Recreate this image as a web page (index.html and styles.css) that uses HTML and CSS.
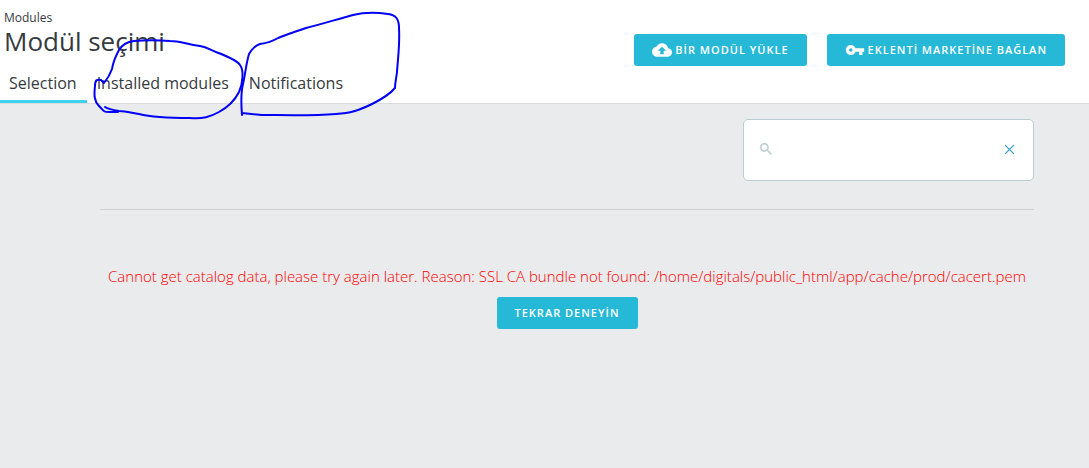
FILE: index.html
```html
<!DOCTYPE html>
<html lang="tr">
<head>
  <meta charset="UTF-8">
  <meta name="viewport" content="width=device-width, initial-scale=1">
  <title>Modül seçimi</title>
  <link rel="stylesheet" href="styles.css">
</head>
<body>

  <header class="page-head">
    <div class="heading">
      <div class="breadcrumb">Modules</div>
      <h1 class="title">Modül seçimi</h1>
      <nav class="tabs">
        <a class="tab current" href="#selection">Selection</a>
        <a class="tab" href="#installed">Installed modules</a>
        <a class="tab" href="#notifications">Notifications</a>
      </nav>
    </div>

    <div class="toolbar">
      <button class="btn" type="button">
        <svg class="icon" viewBox="0 0 24 24"><path d="M19.35 10.04C18.67 6.59 15.64 4 12 4 9.11 4 6.6 5.64 5.35 8.04 2.34 8.36 0 10.91 0 14c0 3.31 2.69 6 6 6h13c2.76 0 5-2.24 5-5 0-2.64-2.05-4.78-4.65-4.96zM14 13v4h-4v-4H7l5-5 5 5h-3z"/></svg>
        BİR MODÜL YÜKLE
      </button>
      <button class="btn" type="button">
        <svg class="icon" viewBox="0 0 24 24"><path d="M12.65 10C11.83 7.67 9.61 6 7 6c-3.31 0-6 2.69-6 6s2.69 6 6 6c2.61 0 4.83-1.67 5.65-4H17v4h4v-4h2v-4H12.65zM7 14c-1.1 0-2-.9-2-2s.9-2 2-2 2 .9 2 2-.9 2-2 2z"/></svg>
        EKLENTİ MARKETİNE BAĞLAN
      </button>
    </div>
  </header>

  <main class="content">
    <form class="search">
      <svg class="search-icon" viewBox="0 0 24 24"><path d="M15.5 14h-.79l-.28-.27C15.41 12.59 16 11.11 16 9.5 16 5.91 13.09 3 9.5 3S3 5.91 3 9.5 5.91 16 9.5 16c1.61 0 3.09-.59 4.23-1.57l.27.28v.79l5 4.99L20.49 19l-4.99-5zm-6 0C7.01 14 5 11.99 5 9.5S7.01 5 9.5 5 14 7.01 14 9.5 11.99 14 9.5 14z"/></svg>
      <input class="search-input" type="text" aria-label="Search modules">
      <button class="clear" type="reset" aria-label="Clear">
        <svg class="clear-icon" viewBox="0 0 10 10"><path d="M1 1l8 8M9 1L1 9"/></svg>
      </button>
    </form>

    <hr class="rule">

    <div class="failure">
      <p class="error">Cannot get catalog data, please try again later. Reason: SSL CA bundle not found: /home/digitals/public_html/app/cache/prod/cacert.pem</p>
      <button class="btn" type="button">TEKRAR DENEYİN</button>
    </div>
  </main>

  <!-- pen marks around the two tabs -->
  <svg class="marks" width="410" height="130" viewBox="0 0 410 130">
    <path d="M105 107C108 109 113 110 119 111C126 111 132 113 139 114C151 117 171 118 190 118C203 119 210 117 219 112C230 106 235 100 239 92C243 83 244 70 240 65C237 60 226 56 216 52C209 49 206 47 200 46C186 44 180 41 170 41C158 40 144 40 134 41C126 42 122 45 119 50C114 59 113 63 112 69C110 75 108 78 104 83L101 80C97 79 95 80 95 86C94 95 94 101 99 106C104 111 103 112 109 112L118 112"/>
    <path d="M242 115C241 103 241 92 243 84C245 76 246 64 249 54C251 50 256 45 260 44C268 43 273 41 278 38C285 35 297 31 306 28C322 24 338 19 353 15C361 13 374 12 388 14C396 15 399 19 399 28C400 44 398 57 397 72C396 80 395 83 395 88C390 94 380 100 372 104C358 111 350 113 336 114C312 116 280 115 262 115L242 113"/>
  </svg>

</body>
</html>
```
FILE: styles.css
```css
* {
  box-sizing: border-box;
}

body {
  margin: 0;
  min-height: 100vh;
  background: #e9ebec;
  color: #363a41;
  font-family: "Open Sans", "Noto Sans", sans-serif;
}

.page-head {
  display: flex;
  justify-content: space-between;
  align-items: flex-start;
  background: #fff;
  border-bottom: 1px solid #d9dbdc;
}

.heading {
  padding-top: 10px;
}

.breadcrumb {
  padding-left: 4px;
  font-size: 12px;
  line-height: 16px;
}

.title {
  margin: 0;
  padding-left: 4px;
  font-size: 26px;
  font-weight: 400;
  line-height: 30px;
}

.tabs {
  display: flex;
  gap: 1px;
  padding-top: 12px;
}

.tab {
  padding: 3px 10px 5px 9px;
  border-bottom: 3px solid transparent;
  color: inherit;
  font-size: 16px;
  line-height: 24px;
  text-decoration: none;
}

.tab.current {
  border-color: #3ed2f0;
}

.toolbar {
  display: flex;
  gap: 20px;
  padding: 34px 24px 0 0;
}

.btn {
  display: inline-flex;
  align-items: center;
  gap: 3px;
  height: 32px;
  padding: 0 18px 1px;
  border: none;
  border-radius: 3px;
  background: #25b9d7;
  color: #fff;
  font-family: inherit;
  font-size: 11px;
  font-weight: 600;
  letter-spacing: 1px;
  white-space: nowrap;
  cursor: pointer;
}

.icon {
  width: 20px;
  height: 20px;
  fill: currentColor;
}

.content {
  padding: 15px 55px 0 100px;
}

.search {
  display: flex;
  align-items: center;
  width: 291px;
  height: 62px;
  margin-left: auto;
  padding: 0 16px 2px 14px;
  border: 1px solid #bbcdd2;
  border-radius: 5px;
  background: #fff;
}

.search-icon {
  width: 16px;
  height: 16px;
  fill: #bbcdd2;
  stroke: #bbcdd2;
  stroke-width: 0.5;
}

.search-input {
  flex: 1;
  min-width: 0;
  height: 32px;
  border: none;
  outline: none;
  font: inherit;
}

.clear {
  display: flex;
  padding: 2px;
  border: none;
  background: none;
  cursor: pointer;
}

.clear-icon {
  width: 11px;
  height: 11px;
  stroke: #3ba0cc;
  stroke-width: 1.2;
}

.rule {
  margin: 28px 0 0;
  border: none;
  border-top: 1px solid #cfd2d4;
}

.failure {
  padding-top: 55px;
  text-align: center;
}

.error {
  margin: 0 0 10px;
  color: #f00;
  font-size: 15px;
  font-weight: 300;
  line-height: 22px;
}

.marks {
  position: absolute;
  top: 0;
  left: 0;
  fill: none;
  stroke: #0000f5;
  stroke-width: 2;
  stroke-linecap: round;
  stroke-linejoin: round;
  pointer-events: none;
}
```
